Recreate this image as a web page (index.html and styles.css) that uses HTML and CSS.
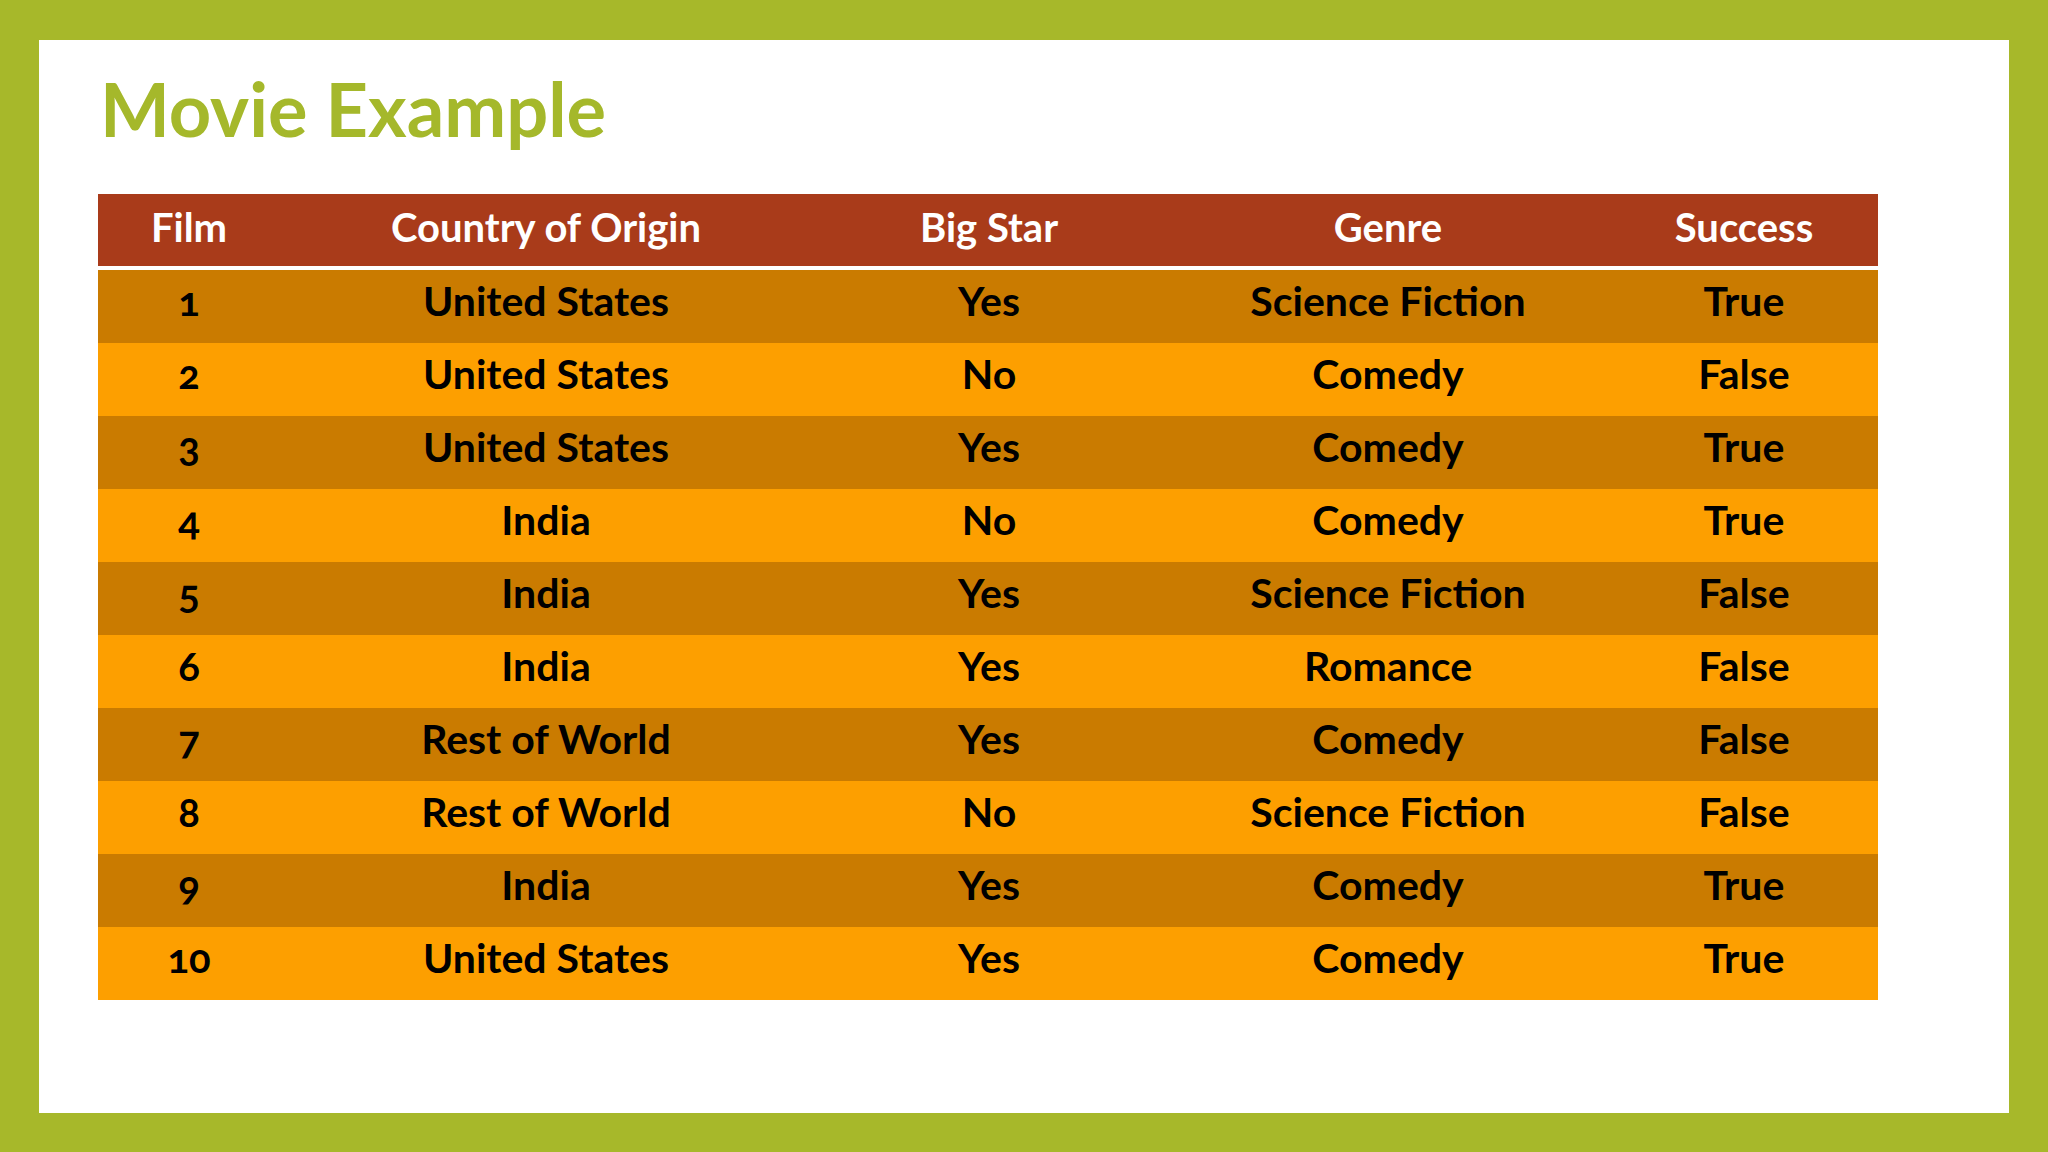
FILE: index.html
```html
<!DOCTYPE html>
<html>
<head>
<meta charset="utf-8">
<link rel="stylesheet" href="styles.css">
</head>
<body>
<div class="slide">
  <h1 class="title">Movie Example</h1>
  <div class="table">
    <div class="row head">
      <div class="cell">Film</div><div class="cell">Country of Origin</div><div class="cell">Big Star</div><div class="cell">Genre</div><div class="cell">Success</div>
    </div>
    <div class="row dark"><div class="cell num">1</div><div class="cell">United States</div><div class="cell">Yes</div><div class="cell">Science Fiction</div><div class="cell">True</div></div>
    <div class="row light"><div class="cell num">2</div><div class="cell">United States</div><div class="cell">No</div><div class="cell">Comedy</div><div class="cell">False</div></div>
    <div class="row dark"><div class="cell num">3</div><div class="cell">United States</div><div class="cell">Yes</div><div class="cell">Comedy</div><div class="cell">True</div></div>
    <div class="row light"><div class="cell num">4</div><div class="cell">India</div><div class="cell">No</div><div class="cell">Comedy</div><div class="cell">True</div></div>
    <div class="row dark"><div class="cell num">5</div><div class="cell">India</div><div class="cell">Yes</div><div class="cell">Science Fiction</div><div class="cell">False</div></div>
    <div class="row light"><div class="cell num">6</div><div class="cell">India</div><div class="cell">Yes</div><div class="cell">Romance</div><div class="cell">False</div></div>
    <div class="row dark"><div class="cell num">7</div><div class="cell">Rest of World</div><div class="cell">Yes</div><div class="cell">Comedy</div><div class="cell">False</div></div>
    <div class="row light"><div class="cell num">8</div><div class="cell">Rest of World</div><div class="cell">No</div><div class="cell">Science Fiction</div><div class="cell">False</div></div>
    <div class="row dark"><div class="cell num">9</div><div class="cell">India</div><div class="cell">Yes</div><div class="cell">Comedy</div><div class="cell">True</div></div>
    <div class="row light"><div class="cell num">10</div><div class="cell">United States</div><div class="cell">Yes</div><div class="cell">Comedy</div><div class="cell">True</div></div>
  </div>
</div>
</body>
</html>
```
FILE: styles.css
```css
html, body {
  margin: 0;
  padding: 0;
}
body {
  background: #a7b82a;
  width: 2048px;
  height: 1152px;
  overflow: hidden;
  font-family: Lato, "Open Sans", sans-serif;
}
.slide {
  box-sizing: border-box;
  margin: 40px 39px 0 39px;
  height: 1073px;
  background: #ffffff;
  padding: 28px 0 0 59px;
}
.title {
  margin: 0 0 45px 2px;
  font-size: 74px;
  line-height: 81px;
  font-weight: 700;
  color: #a5b82b;
}
.table {
  width: 1780px;
}
.row {
  display: grid;
  grid-template-columns: 182px 532px 354px 444px 268px;
  height: 73px;
}
.row.head {
  height: 72px;
  background: #a93b1a;
  color: #ffffff;
  border-bottom: 4px solid #ffffff;
}
.row.dark {
  background: #ca7b00;
}
.row.light {
  background: #fd9f00;
}
.cell {
  display: flex;
  align-items: center;
  justify-content: center;
  font-size: 41px;
  font-weight: 700;
  color: #000000;
  padding-bottom: 12px;
  box-sizing: border-box;
  white-space: nowrap;
}
.head .cell {
  color: #ffffff;
  font-weight: 700;
  font-size: 40px;
  padding-bottom: 6px;
}
.num {
  font-variant-numeric: oldstyle-nums;
  font-size: 40px;
}
```
